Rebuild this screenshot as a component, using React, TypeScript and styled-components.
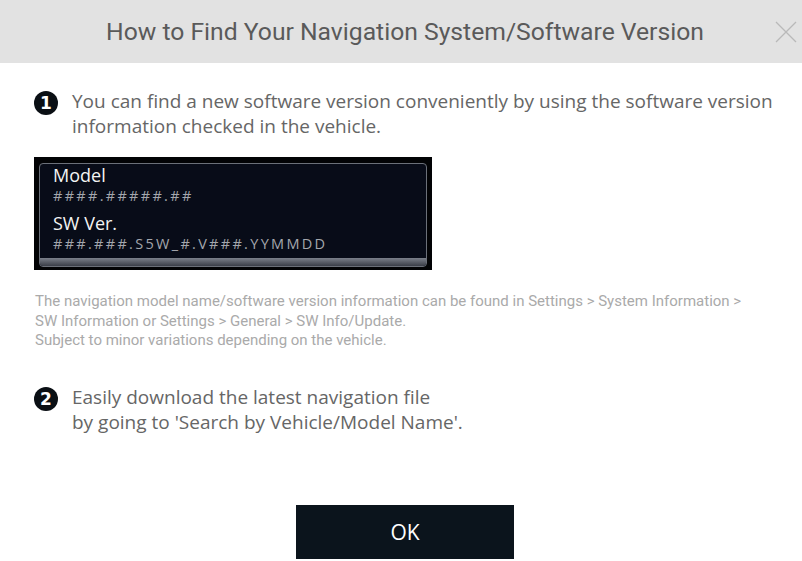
import styled, { createGlobalStyle } from "styled-components";

const GlobalStyle = createGlobalStyle`
    html, body {
        margin: 0;
        padding: 0;
        background: #ffffff;
        overflow: hidden;
    }
    * {
        box-sizing: border-box;
    }
`

const Modal = styled.div`
    width: 810px;
    height: 561px;
    background: #ffffff;
    display: flex;
    flex-direction: column;
    font-family: Roboto, "Liberation Sans", sans-serif;
`

const Header = styled.div`
    height: 63px;
    background: #e2e2e2;
    display: grid;
    grid-template-columns: 60px 1fr 60px;
    align-items: center;
`

const Title = styled.h1`
    grid-column: 2;
    margin: 0;
    text-align: center;
    font-size: 24.7px;
    font-weight: 400;
    color: #5a5a5a;
`

const CloseButton = styled.button`
    grid-column: 3;
    justify-self: end;
    margin-right: 12px;
    width: 24px;
    height: 24px;
    padding: 0;
    border: none;
    background: transparent;
    display: flex;
    align-items: center;
    justify-content: center;
`

const Body = styled.div`
    flex: 1;
    display: flex;
    flex-direction: column;
    padding: 26px 0 0 34px;
`

const Step = styled.div<{ top?: number }>`
    display: flex;
    align-items: flex-start;
    gap: 14px;
    margin-top: ${props => props.top || 0}px;
`

const Num = styled.span`
    flex: none;
    width: 24px;
    height: 24px;
    margin-top: 2px;
    border-radius: 50%;
    background: #0a0f14;
    color: #ffffff;
    font-family: "DejaVu Sans", sans-serif;
    font-size: 17px;
    font-weight: 700;
    display: flex;
    align-items: center;
    justify-content: center;
`

const StepText = styled.p`
    margin: 0;
    font-family: "Open Sans", sans-serif;
    font-size: 19px;
    line-height: 25px;
    color: #666666;
`

const Screen = styled.div`
    margin-top: 18px;
    width: 398px;
    height: 113px;
    background: #020305;
    padding: 6px 5px 3px 5px;
    display: flex;
    flex-direction: column;
`

const Panel = styled.div`
    flex: 1;
    border: 1px solid #6b7079;
    border-radius: 4px;
    background: #080c18;
    padding: 0 0 0 13px;
    display: flex;
    flex-direction: column;
    position: relative;
    overflow: hidden;
    &:after {
        content: "";
        position: absolute;
        left: 0;
        right: 0;
        bottom: 0;
        height: 8px;
        background: linear-gradient(#7b808a, #3a3e48);
    }
`

const Label = styled.span<{ top?: number }>`
    font-family: "Open Sans", sans-serif;
    font-size: 18px;
    line-height: 22px;
    color: #f4f4f4;
    margin-top: ${props => props.top || 0}px;
`

const Value = styled.span`
    font-family: "Open Sans", sans-serif;
    font-size: 14.5px;
    line-height: 20px;
    color: #a4a7ad;
    letter-spacing: 2.3px;
`

const Note = styled.p`
    margin: 22px 0 0 1px;
    font-size: 15px;
    line-height: 19.5px;
    color: #aaaaaa;
`

const Footer = styled.div`
    margin-top: auto;
    display: flex;
    justify-content: center;
    padding-bottom: 2px;
`

const OkButton = styled.button`
    width: 218px;
    height: 54px;
    border: none;
    background: #0b141c;
    color: #ffffff;
    font-family: "Open Sans", sans-serif;
    font-size: 21px;
`

const App = () => {
    return (
        <Modal>
            <GlobalStyle />
            <Header>
                <Title>How to Find Your Navigation System/Software Version</Title>
                <CloseButton aria-label="close">
                    <svg width="22" height="22" viewBox="0 0 22 22">
                        <path d="M1 1L21 21M21 1L1 21" stroke="#b9b9b9" strokeWidth="1.3" fill="none" />
                    </svg>
                </CloseButton>
            </Header>
            <Body>
                <Step>
                    <Num>1</Num>
                    <StepText>
                        You can find a new software version conveniently by using the software version<br />
                        information checked in the vehicle.
                    </StepText>
                </Step>
                <Screen>
                    <Panel>
                        <Label>Model</Label>
                        <Value>####.#####.##</Value>
                        <Label top={6}>SW Ver.</Label>
                        <Value>###.###.S5W_#.V###.YYMMDD</Value>
                    </Panel>
                </Screen>
                <Note>
                    The navigation model name/software version information can be found in Settings &gt; System Information &gt;<br />
                    SW Information or Settings &gt; General &gt; SW Info/Update.<br />
                    Subject to minor variations depending on the vehicle.
                </Note>
                <Step top={34}>
                    <Num>2</Num>
                    <StepText>
                        Easily download the latest navigation file<br />
                        by going to 'Search by Vehicle/Model Name'.
                    </StepText>
                </Step>
            </Body>
            <Footer>
                <OkButton>OK</OkButton>
            </Footer>
        </Modal>
    )
}

export default App;
